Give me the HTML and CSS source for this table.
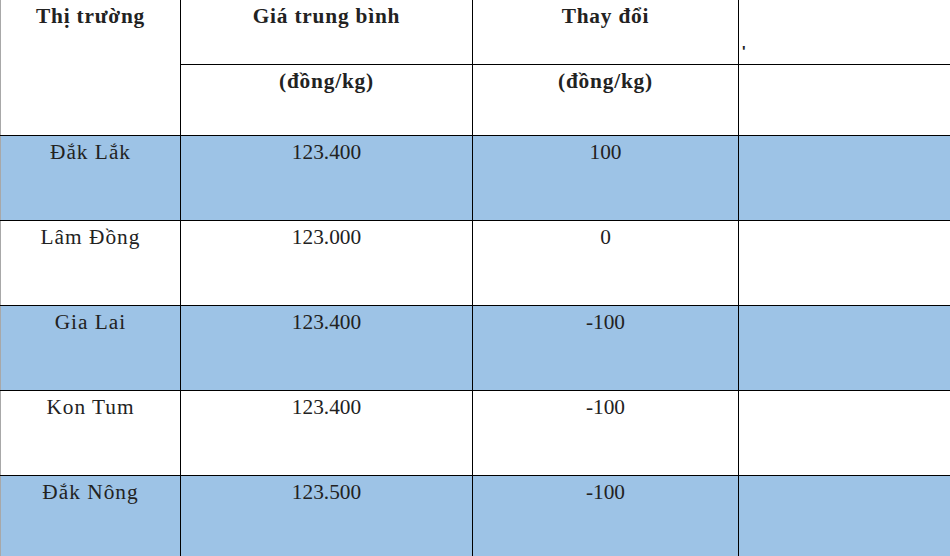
FILE: index.html
```html
<!DOCTYPE html>
<html lang="vi">
<head>
<meta charset="utf-8">
<title>Giá cà phê</title>
<link rel="stylesheet" href="styles.css">
</head>
<body>
<div class="wrap">
<table class="price">
  <colgroup>
    <col class="c1"><col class="c2"><col class="c3"><col class="c4">
  </colgroup>
  <thead>
    <tr class="h1">
      <th rowspan="2">Thị trường</th>
      <th>Giá trung bình</th>
      <th>Thay đổi</th>
      <th class="mark"><span>'</span></th>
    </tr>
    <tr class="h2">
      <th>(đồng/kg)</th>
      <th>(đồng/kg)</th>
      <th></th>
    </tr>
  </thead>
  <tbody>
    <tr class="blue"><td>Đắk Lắk</td><td>123.400</td><td>100</td><td></td></tr>
    <tr><td>Lâm Đồng</td><td>123.000</td><td>0</td><td></td></tr>
    <tr class="blue"><td>Gia Lai</td><td>123.400</td><td>-100</td><td></td></tr>
    <tr><td>Kon Tum</td><td>123.400</td><td>-100</td><td></td></tr>
    <tr class="blue"><td>Đắk Nông</td><td>123.500</td><td>-100</td><td></td></tr>
  </tbody>
</table>
</div>
</body>
</html>
```
FILE: styles.css
```css
html, body {
  margin: 0;
  padding: 0;
  background: #fff;
}
.wrap {
  width: 950px;
  height: 556px;
  overflow: hidden;
}
.price {
  border-collapse: collapse;
  table-layout: fixed;
  width: 1020px;
  font-family: "Liberation Serif", "Times New Roman", serif;
  font-size: 21.33px;
  color: #222;
  border-left: 1px solid #a8a8a8;
}
.c1 { width: 180px; }
.c2 { width: 292px; }
.c3 { width: 266px; }
.c4 { width: 282px; }
.price th, .price td {
  border: 1px solid #000;
  vertical-align: top;
  text-align: center;
  padding: 4px 4px 0;
}
.price th {
  font-weight: bold;
  letter-spacing: 0.8px;
}
.price td:first-child {
  letter-spacing: 1px;
}
.price thead tr.h1 th {
  border-top: none;
}
.price th:first-child, .price td:first-child {
  border-left: 1px solid #a8a8a8;
}
.h1 { height: 64px; }
.h2 { height: 71px; }
tbody tr { height: 85px; }
.blue td { background: #9dc3e6; }
.price th.mark {
  text-align: left;
  vertical-align: bottom;
  padding: 0 0 3px 3px;
  line-height: 1;
}
.mark span {
  font-size: 15px;
  font-weight: bold;
  font-family: "Liberation Sans", Arial, sans-serif;
}
```
